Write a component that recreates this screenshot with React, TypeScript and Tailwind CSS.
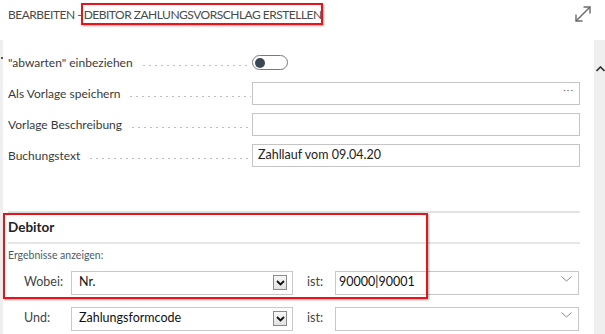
import React from 'react';

const font = 'Lato, "Open Sans", sans-serif';

function Leader() {
  return (
    <span className="flex-1 ml-[8px] mr-[1px] h-[3px] self-center translate-y-[3px] bg-[radial-gradient(circle,#bdbdbd_0.7px,transparent_1.1px)] bg-[length:6px_3px] bg-repeat-x" />
  );
}

function FieldRow({ label, children }: { label: string; children: React.ReactNode }) {
  return (
    <div className="flex items-center h-[23px]">
      <div className="flex items-center w-[244px] shrink-0 text-[12px] text-[#3a3a3a]">
        <span className="whitespace-nowrap">{label}</span>
        <Leader />
      </div>
      <div className="flex-1 h-full">{children}</div>
    </div>
  );
}

function TextBox({ value, more }: { value?: string; more?: boolean }) {
  return (
    <div className="h-full border border-[#c4c4c4] bg-white flex items-center px-[5px] text-[12.5px] text-[#222]">
      <span className="flex-1">{value}</span>
      {more && <span className="text-[10px] text-[#777] tracking-[1px] -translate-y-[4px]">···</span>}
    </div>
  );
}

function Toggle() {
  return (
    <div className="w-[36px] h-[15px] rounded-full border-[1.5px] border-[#7a7a7a] flex items-center px-[2px]">
      <span className="w-[10px] h-[10px] rounded-full bg-[#3b4656]" />
    </div>
  );
}

function SelectBox({ value }: { value: string }) {
  return (
    <div className="w-[222px] h-[24px] border border-[#c8c8c8] bg-white flex items-center pl-[7px] pr-[5px] text-[12.5px] text-[#111]">
      <span className="flex-1">{value}</span>
      <span className="w-[14px] h-[15px] border border-[#8a8a8a] bg-gradient-to-b from-[#f8f8f8] to-[#e2e2e2] flex items-center justify-center">
        <svg width="9" height="6" viewBox="0 0 9 6">
          <path d="M1 1 L4.5 4.5 L8 1" fill="none" stroke="#111" strokeWidth="1.8" />
        </svg>
      </span>
    </div>
  );
}

function FilterInput({ value }: { value?: string }) {
  return (
    <div className="w-[244px] h-[24px] border border-[#c8c8c8] bg-white flex items-center pl-[3px] pr-[6px] text-[12.5px] text-[#111]">
      <span className="flex-1">{value}</span>
      <svg width="11" height="6" viewBox="0 0 11 6" className="-translate-y-[4px]">
        <path d="M0.5 0.5 L5.5 5 L10.5 0.5" fill="none" stroke="#888" strokeWidth="1" />
      </svg>
    </div>
  );
}

function FilterRow({ label, field, value }: { label: string; field: string; value?: string }) {
  return (
    <div className="flex items-center h-[24px]">
      <span className="w-[63px] pl-[16px] text-[12.5px] text-[#444]">{label}</span>
      <SelectBox value={field} />
      <span className="w-[42px] pl-[14px] text-[12.5px] text-[#444]">ist:</span>
      <FilterInput value={value} />
    </div>
  );
}

export default function App() {
  return (
    <div className="relative w-[605px] h-[334px] bg-white overflow-hidden" style={{ fontFamily: font }}>
      <div className="h-[40px] flex items-start justify-between pl-[8px] pr-[13px]">
        <div className="mt-[6px] text-[12px] tracking-[-0.5px] text-[#4a4a4a]">
          BEARBEITEN - DEBITOR ZAHLUNGSVORSCHLAG ERSTELLEN
        </div>
        <svg width="18" height="18" viewBox="0 0 18 18" className="mt-[5px]">
          <path d="M2 16 L16 2" stroke="#6a6a6a" strokeWidth="1.4" />
          <path d="M9.5 2 L16 2 L16 8.5" fill="none" stroke="#6a6a6a" strokeWidth="1.4" />
          <path d="M2 9.5 L2 16 L8.5 16" fill="none" stroke="#6a6a6a" strokeWidth="1.4" />
        </svg>
      </div>

      <div className="flex h-[294px]">
        <div className="w-[3px] bg-[#efefef] relative">
          <span className="absolute left-[1px] top-[17px] w-[2px] h-[2px] bg-[#555]" />
        </div>

        <div className="flex-1 pl-[5px] pr-[14px]">
          <div className="pt-[11px] flex flex-col gap-[8px]">
            <FieldRow label={'"abwarten" einbeziehen'}>
              <div className="h-full flex items-center">
                <Toggle />
              </div>
            </FieldRow>
            <FieldRow label="Als Vorlage speichern">
              <TextBox more />
            </FieldRow>
            <FieldRow label="Vorlage Beschreibung">
              <TextBox />
            </FieldRow>
            <FieldRow label="Buchungstext">
              <TextBox value="Zahllauf vom 09.04.20" />
            </FieldRow>
          </div>

          <div className="mt-[44px] border-t-2 border-[#e2e2e2]" />

          <div className="h-[31px] flex items-center border-b-2 border-[#e6e6e6] text-[13.5px] font-bold text-[#222]">
            Debitor
          </div>
          <div className="mt-[4px] text-[10.5px] text-[#4e5a6a]">Ergebnisse anzeigen:</div>
          <div className="mt-[7px] flex flex-col gap-[12px]">
            <FilterRow label="Wobei:" field="Nr." value="90000|90001" />
            <FilterRow label="Und:" field="Zahlungsformcode" />
          </div>
        </div>

        <div className="w-[11px] bg-[#efefef] pt-[26px] pl-[2px]">
          <svg width="9" height="6" viewBox="0 0 9 6">
            <path d="M0.5 5 L4.5 1 L8.5 5" fill="none" stroke="#333" strokeWidth="1.6" />
          </svg>
        </div>
      </div>

      <div className="absolute left-[81px] top-[3px] w-[242px] h-[22px] border-2 border-[#e8141a] shadow-[1px_1px_2px_rgba(0,0,0,0.35)]" />
      <div className="absolute left-[3px] top-[213px] w-[425px] h-[86px] border-2 border-[#e8141a] shadow-[1px_1px_2px_rgba(0,0,0,0.35)]" />
    </div>
  );
}
